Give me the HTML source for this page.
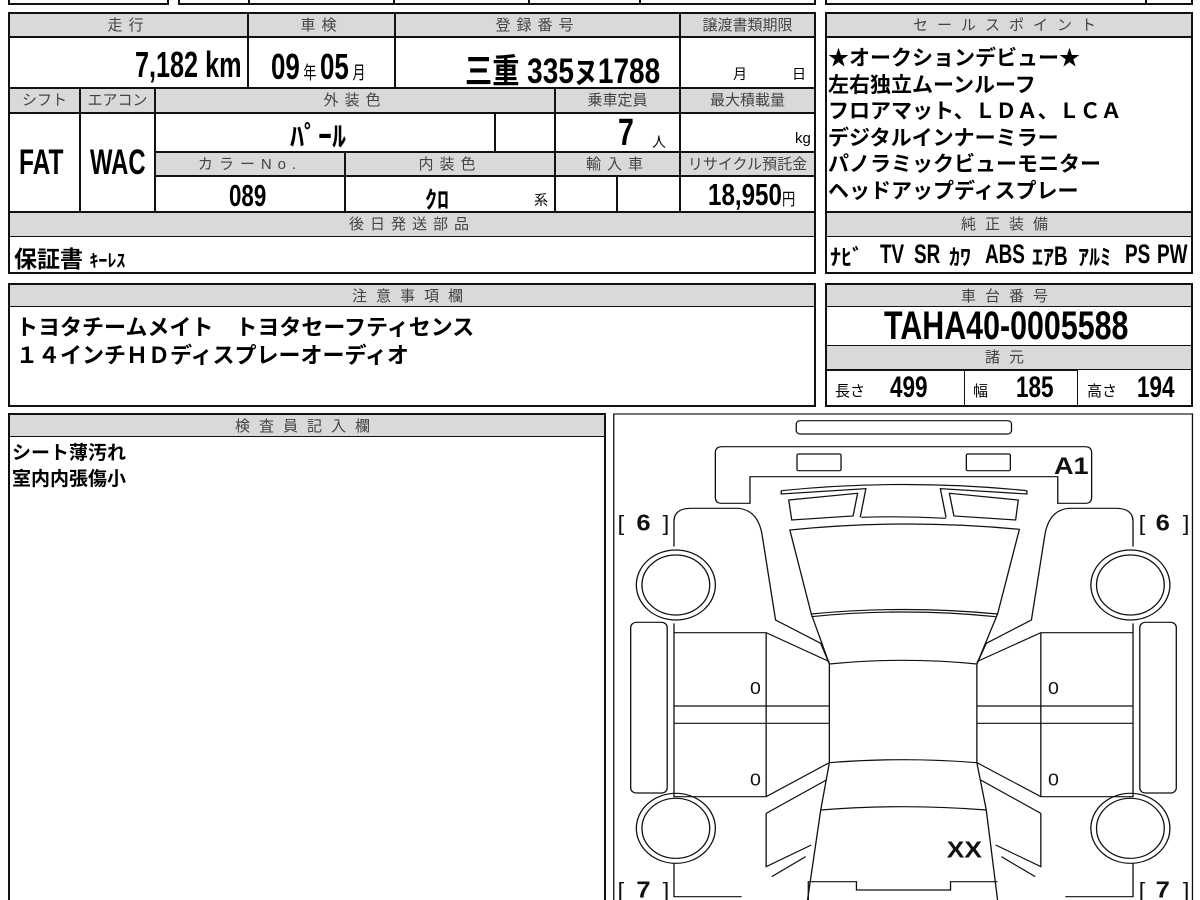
<!DOCTYPE html>
<html><head><meta charset="utf-8"><style>
*{margin:0;padding:0;box-sizing:border-box}
body{width:1200px;height:900px;background:#fff;position:relative;overflow:hidden;font-family:"Liberation Sans","Noto Sans CJK JP",sans-serif;color:#000}
#w{position:absolute;left:0;top:0;width:1200px;height:900px;overflow:hidden}
.b{position:absolute;border:2px solid #111}
.h{position:absolute;background:#d9d9d9;color:#444;font-size:15px;text-align:center;letter-spacing:6px;line-height:23px;border:1px solid #111;white-space:nowrap;overflow:hidden}
.c{position:absolute;border:1px solid #111;white-space:nowrap}
.t{position:absolute;font-weight:bold;white-space:nowrap;transform-origin:left top}
</style></head><body><div id="w">
<div class="b" style="left:8px;top:-4px;width:161px;height:9px"></div>
<div class="b" style="left:178px;top:-4px;width:638px;height:9px"></div>
<div class="c" style="left:248px;top:-4px;width:147px;height:9px;border-width:0 2px"></div>
<div class="c" style="left:528px;top:-4px;width:113px;height:9px;border-width:0 2px"></div>
<div class="b" style="left:825px;top:-4px;width:368px;height:9px"></div>
<div class="c" style="left:1145px;top:-4px;width:2px;height:9px;border-width:0 1px"></div>

<div class="b" style="left:8px;top:12px;width:808px;height:262px"></div>
<div class="h" style="left:9px;top:13px;width:239px;height:24px">走行</div>
<div class="h" style="left:248px;top:13px;width:147px;height:24px">車検</div>
<div class="h" style="left:395px;top:13px;width:285px;height:24px">登録番号</div>
<div class="h" style="left:680px;top:13px;width:135px;height:24px;letter-spacing:0">譲渡書類期限</div>
<div class="c" style="left:9px;top:37px;width:239px;height:51px"></div>
<div class="c" style="left:248px;top:37px;width:147px;height:51px"></div>
<div class="c" style="left:395px;top:37px;width:285px;height:51px"></div>
<div class="c" style="left:680px;top:37px;width:135px;height:51px"></div>
<div class="t" style="left:135px;top:44px;font-size:36px;transform:scaleX(.7)">7,182 km</div>
<div class="t" style="left:271px;top:46px;font-size:36px;transform:scaleX(.72)">09<span style="font-size:18px;font-weight:normal"> 年 </span>05<span style="font-size:18px;font-weight:normal"> 月</span></div>
<div class="t" style="left:465px;top:44px;font-size:35px;transform:scaleX(.8)"><span style="font-size:34px">三重</span> 335<span style="font-size:30px">ヌ</span>1788</div>
<div class="t" style="left:733px;top:64px;font-size:14px;font-weight:normal">月</div>
<div class="t" style="left:792px;top:64px;font-size:14px;font-weight:normal">日</div>

<div class="h" style="left:9px;top:88px;width:71px;height:25px;letter-spacing:0">シフト</div>
<div class="h" style="left:80px;top:88px;width:75px;height:25px;letter-spacing:0">エアコン</div>
<div class="h" style="left:155px;top:88px;width:400px;height:25px">外装色</div>
<div class="h" style="left:555px;top:88px;width:125px;height:25px;letter-spacing:0">乗車定員</div>
<div class="h" style="left:680px;top:88px;width:135px;height:25px;letter-spacing:0">最大積載量</div>
<div class="c" style="left:9px;top:113px;width:71px;height:99px"></div>
<div class="c" style="left:80px;top:113px;width:75px;height:99px"></div>
<div class="t" style="left:19px;top:143px;font-size:35px;transform:scaleX(.7)">FAT</div>
<div class="t" style="left:90px;top:143px;font-size:35px;transform:scaleX(.68)">WAC</div>
<div class="c" style="left:155px;top:113px;width:340px;height:39px"></div>
<div class="c" style="left:495px;top:113px;width:60px;height:39px"></div>
<div class="c" style="left:555px;top:113px;width:125px;height:39px"></div>
<div class="c" style="left:680px;top:113px;width:135px;height:39px"></div>
<div class="t" style="left:290px;top:115px;font-size:28px">ﾊﾟｰﾙ</div>
<div class="t" style="left:618px;top:112px;font-size:38px;transform:scaleX(.75)">7</div>
<div class="t" style="left:652px;top:132px;font-size:14px;font-weight:normal">人</div>
<div class="t" style="left:795px;top:130px;font-size:15px;font-weight:normal">kg</div>
<div class="h" style="left:155px;top:152px;width:190px;height:24px">カラーNo.</div>
<div class="h" style="left:345px;top:152px;width:210px;height:24px">内装色</div>
<div class="h" style="left:555px;top:152px;width:125px;height:24px">輸入車</div>
<div class="h" style="left:680px;top:152px;width:135px;height:24px;letter-spacing:0">リサイクル預託金</div>
<div class="c" style="left:155px;top:176px;width:190px;height:36px"></div>
<div class="c" style="left:345px;top:176px;width:210px;height:36px"></div>
<div class="c" style="left:555px;top:176px;width:62px;height:36px"></div>
<div class="c" style="left:617px;top:176px;width:63px;height:36px"></div>
<div class="c" style="left:680px;top:176px;width:135px;height:36px"></div>
<div class="t" style="left:229px;top:178px;font-size:31px;transform:scaleX(.72)">089</div>
<div class="t" style="left:425px;top:180px;font-size:24px">ｸﾛ</div>
<div class="t" style="left:534px;top:190px;font-size:14px;font-weight:normal">系</div>
<div class="t" style="left:708px;top:177px;font-size:31px;transform:scaleX(.78)">18,950<span style="font-size:17px;font-weight:normal">円</span></div>
<div class="h" style="left:9px;top:212px;width:806px;height:25px">後日発送部品</div>
<div class="t" style="left:14px;top:240px;font-size:23px">保証書 <span style="font-size:18px">ｷｰﾚｽ</span></div>

<div class="b" style="left:825px;top:12px;width:368px;height:262px"></div>
<div class="h" style="left:826px;top:13px;width:366px;height:24px;letter-spacing:9px">セールスポイント</div>
<div class="c" style="left:826px;top:37px;width:366px;height:175px;border-width:1px 0"></div>
<div class="t" style="left:828px;top:46px;font-size:21px;line-height:26.5px">★オークションデビュー★<br>左右独立ムーンルーフ<br>フロアマット、ＬＤＡ、ＬＣＡ<br>デジタルインナーミラー<br>パノラミックビューモニター<br>ヘッドアップディスプレー</div>
<div class="h" style="left:826px;top:212px;width:366px;height:25px;letter-spacing:9px">純正装備</div>
<div class="t" style="left:830px;top:240px;font-size:22px">ﾅﾋﾞ</div>
<div class="t" style="left:880px;top:239px;font-size:27px;transform:scaleX(.7)">TV</div>
<div class="t" style="left:914px;top:239px;font-size:27px;transform:scaleX(.7)">SR</div>
<div class="t" style="left:949px;top:240px;font-size:22px">ｶﾜ</div>
<div class="t" style="left:985px;top:239px;font-size:27px;transform:scaleX(.7)">ABS</div>
<div class="t" style="left:1032px;top:240px;font-size:22px">ｴｱ<span style="font-size:27px;display:inline-block;transform:scaleX(.7);transform-origin:left">B</span></div>
<div class="t" style="left:1078px;top:240px;font-size:22px">ｱﾙﾐ</div>
<div class="t" style="left:1125px;top:239px;font-size:27px;transform:scaleX(.7)">PS</div>
<div class="t" style="left:1157px;top:239px;font-size:27px;transform:scaleX(.7)">PW</div>

<div class="b" style="left:8px;top:283px;width:808px;height:124px"></div>
<div class="h" style="left:9px;top:284px;width:806px;height:23px;letter-spacing:9px">注意事項欄</div>
<div class="t" style="left:16px;top:314px;font-size:22px;line-height:28px">トヨタチームメイト　トヨタセーフティセンス<br>１４インチＨＤディスプレーオーディオ</div>

<div class="b" style="left:825px;top:283px;width:368px;height:124px"></div>
<div class="h" style="left:826px;top:284px;width:366px;height:23px;letter-spacing:9px">車台番号</div>
<div class="t" style="left:884px;top:304px;font-size:40px;transform:scaleX(.76)">TAHA40-0005588</div>
<div class="h" style="left:826px;top:345px;width:366px;height:25px;letter-spacing:9px">諸元</div>
<div class="c" style="left:826px;top:370px;width:139px;height:36px;border-width:1px 1px 0 0"></div>
<div class="c" style="left:965px;top:370px;width:113px;height:36px;border-width:1px 1px 0 0"></div>
<div class="t" style="left:835px;top:380px;font-size:15px;font-weight:normal">長さ</div>
<div class="t" style="left:890px;top:371px;font-size:30px;transform:scaleX(.75)">499</div>
<div class="t" style="left:973px;top:380px;font-size:15px;font-weight:normal">幅</div>
<div class="t" style="left:1016px;top:371px;font-size:30px;transform:scaleX(.75)">185</div>
<div class="t" style="left:1087px;top:380px;font-size:15px;font-weight:normal">高さ</div>
<div class="t" style="left:1137px;top:371px;font-size:30px;transform:scaleX(.75)">194</div>

<div class="b" style="left:8px;top:413px;width:598px;height:500px"></div>
<div class="h" style="left:9px;top:414px;width:596px;height:23px;letter-spacing:9px">検査員記入欄</div>
<div class="t" style="left:12px;top:441px;font-size:19px;line-height:26px">シート薄汚れ<br>室内内張傷小</div>

<svg style="position:absolute;left:610px;top:410px" width="590" height="490" viewBox="0 0 1568 1470" preserveAspectRatio="none">
<g fill="none" stroke="#111" stroke-width="3.5">
<rect x="10" y="12" width="1538" height="1500"/>
<rect x="495" y="32" width="572" height="40" rx="10"/>
<path d="M280,128 q0,-18 18,-18 H1262 q18,0 18,18 V262 q0,18 -18,18 H1190 V200 H372 V280 H298 q-18,0 -18,-18 Z"/>
<rect x="497" y="132" width="117" height="50" rx="4"/>
<rect x="947" y="132" width="117" height="50" rx="4"/>
<path d="M455,242 Q780,205 1108,242 M455,242 L455,252 L680,236 L665,322 M1108,242 L1108,252 L878,236 L893,322"/>
<path d="M475,270 L658,250 L646,318 L483,330 Z M1085,270 L902,250 L914,318 L1078,330 Z"/>
<path d="M668,322 Q780,318 893,325"/>
<path d="M478,360 Q780,325 1088,358 L1030,612 Q780,585 535,612 Z"/>
<path d="M535,620 Q780,592 1025,620 M535,612 L583,762 M1030,612 L975,762"/>
<path d="M583,762 Q780,740 975,762 V1058 Q780,1040 583,1058 Z"/>
<path d="M583,1058 L560,1200 Q780,1180 1000,1200 L975,1058"/>
<path d="M560,1200 L525,1470 M1000,1200 L1030,1470"/>
<path d="M527,1470 V1415 H655 V1440 H905 V1415 H1030"/>
<path d="M170,410 V335 Q170,295 215,295 H340 Q395,300 405,380 L440,630 L560,700 L583,762"/>
<path d="M170,640 V668 H415 L583,755 M415,668 V1160 M170,888 H583 M170,940 H583 M170,668 V1160 H415 L583,1058"/>
<path d="M415,1210 L575,1110 M415,1210 V1370 L535,1305 M170,1360 V1460 H350 M520,1340 L430,1400"/>
<rect x="55" y="637" width="97" height="512" rx="15"/>
<circle cx="175" cy="525" r="105"/><circle cx="175" cy="525" r="90"/>
<circle cx="175" cy="1255" r="105"/><circle cx="175" cy="1255" r="90"/>
<path d="M1390,410 V335 Q1390,295 1345,295 H1220 Q1165,300 1155,380 L1120,630 L1000,700 L975,762"/>
<path d="M1390,640 V668 H1145 L975,755 M1145,668 V1160 M1390,888 H975 M1390,940 H975 M1390,668 V1160 H1145 L975,1058"/>
<path d="M1145,1210 L985,1110 M1145,1210 V1370 L1025,1305 M1390,1360 V1460 H1210 M1040,1340 L1130,1400"/>
<rect x="1408" y="637" width="97" height="512" rx="15"/>
<circle cx="1383" cy="525" r="105"/><circle cx="1383" cy="525" r="90"/>
<circle cx="1383" cy="1255" r="105"/><circle cx="1383" cy="1255" r="90"/>
</g>
<g font-family="Liberation Sans, sans-serif" font-weight="bold" fill="#111">
<text x="1180" y="192" font-size="72">A1</text>
<text x="895" y="1342" font-size="70">XX</text>
<text x="20" y="362" font-size="64" font-weight="normal">[</text><text x="70" y="362" font-size="68">6</text><text x="140" y="362" font-size="64" font-weight="normal">]</text>
<text x="1405" y="362" font-size="64" font-weight="normal">[</text><text x="1450" y="362" font-size="68">6</text><text x="1522" y="362" font-size="64" font-weight="normal">]</text>
<text x="20" y="1462" font-size="64" font-weight="normal">[</text><text x="70" y="1462" font-size="68">7</text><text x="140" y="1462" font-size="64" font-weight="normal">]</text>
<text x="1405" y="1462" font-size="64" font-weight="normal">[</text><text x="1450" y="1462" font-size="68">7</text><text x="1522" y="1462" font-size="64" font-weight="normal">]</text>
<text x="372" y="852" font-size="52" font-weight="normal">0</text>
<text x="372" y="1127" font-size="52" font-weight="normal">0</text>
<text x="1164" y="852" font-size="52" font-weight="normal">0</text>
<text x="1164" y="1127" font-size="52" font-weight="normal">0</text>
</g>
</svg>
</div></body></html>
